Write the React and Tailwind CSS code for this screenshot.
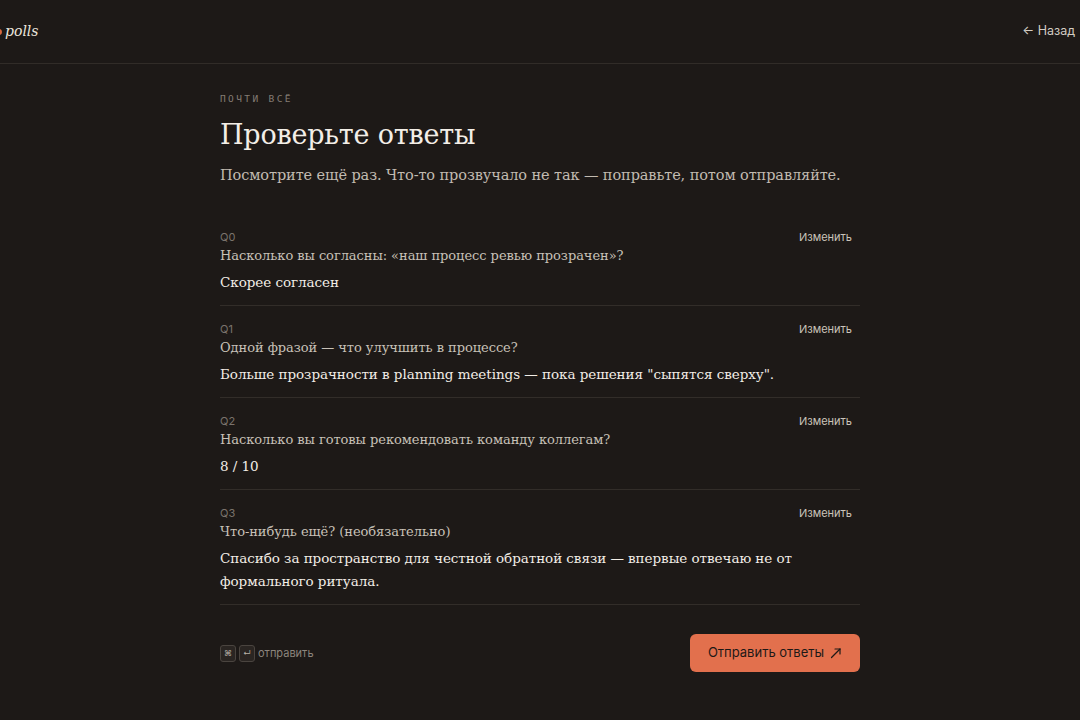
import React from 'react';

const answers = [
  { id: 'Q0', question: 'Насколько вы согласны: «наш процесс ревью прозрачен»?', answer: 'Скорее согласен' },
  { id: 'Q1', question: 'Одной фразой — что улучшить в процессе?', answer: 'Больше прозрачности в planning meetings — пока решения "сыпятся сверху".' },
  { id: 'Q2', question: 'Насколько вы готовы рекомендовать команду коллегам?', answer: '8 / 10' },
  { id: 'Q3', question: 'Что-нибудь ещё? (необязательно)', answer: 'Спасибо за пространство для честной обратной связи — впервые отвечаю не от формального ритуала.' },
];

const serif = "font-['DejaVu_Serif','Liberation_Serif',serif]";
const sans = "font-['Inter','Liberation_Sans',sans-serif]";
const mono = "font-['DejaVu_Sans_Mono','Liberation_Mono',monospace]";

const AnswerRow = ({ item }) => (
  <div className="border-b border-[#322d29] pt-[15px] pb-[11px]">
    <div className="flex items-start justify-between h-[16px]">
      <div className={`${sans} text-[11px] text-[#7a736c] leading-4`}>{item.id}</div>
      <button className={`${sans} text-[11px] text-[#cbc4ba] leading-4 pr-2`}>Изменить</button>
    </div>
    <div className={`${serif} text-[13px] tracking-[-0.05px] text-[#c8c1b7] leading-[22px]`}>{item.question}</div>
    <div className={`${serif} text-[13.5px] tracking-[-0.05px] text-[#f2ede6] leading-[23px] mt-[4px] pr-16`}>{item.answer}</div>
  </div>
);

export default function App() {
  return (
    <div className="min-h-screen w-full bg-[#1d1917] overflow-hidden">
      <header className="h-[64px] border-b border-[#312c28] flex items-center justify-between pr-[5px]">
        <div className="flex items-center gap-[3px] -ml-[4px]">
          <span className="w-[6px] h-[6px] rounded-full bg-[#d8683f]" />
          <span className={`${serif} italic text-[14px] text-[#ece6de]`}>polls</span>
        </div>
        <button className={`${sans} text-[12.5px] text-[#d3ccc3]`}>← Назад</button>
      </header>

      <main className="w-[640px] mx-auto pt-[29px]">
        <div className={`${mono} text-[9.5px] leading-3 tracking-[0.25em] text-[#847c74] uppercase`}>Почти всё</div>
        <h1 className={`${serif} text-[27px] tracking-[-0.2px] text-[#f3eee7] mt-[12px] leading-[36px]`}>Проверьте ответы</h1>
        <p className={`${serif} text-[14.5px] tracking-[-0.1px] text-[#c2bbb1] mt-[10px] leading-6`}>
          Посмотрите ещё раз. Что-то прозвучало не так — поправьте, потом отправляйте.
        </p>

        <div className="mt-[27px]">
          {answers.map((item) => (
            <AnswerRow key={item.id} item={item} />
          ))}
        </div>

        <div className="flex items-center justify-between mt-[29px]">
          <div className={`${sans} flex items-center gap-[3px] text-[11px] text-[#8c857d]`}>
            <span className="w-[16px] h-[17px] rounded-[3px] border border-[#4a443f] bg-[#2a2522] flex items-center justify-center text-[8px] text-[#b9b2a9]">⌘</span>
            <span className="w-[16px] h-[17px] rounded-[3px] border border-[#4a443f] bg-[#2a2522] flex items-center justify-center text-[8px] text-[#b9b2a9]">↵</span>
            <span>отправить</span>
          </div>
          <button className={`${sans} h-[38px] w-[170px] rounded-[6px] bg-[#e2704d] text-[13px] text-[#1d1917] flex items-center justify-center gap-[6px]`}>
            Отправить ответы
            <svg width="12" height="12" viewBox="0 0 12 12" fill="none" stroke="currentColor" strokeWidth="1.2" strokeLinecap="round">
              <path d="M1.5 10.5 L10 2" />
              <path d="M5 2 H10 V7" />
            </svg>
          </button>
        </div>
      </main>
    </div>
  );
}
